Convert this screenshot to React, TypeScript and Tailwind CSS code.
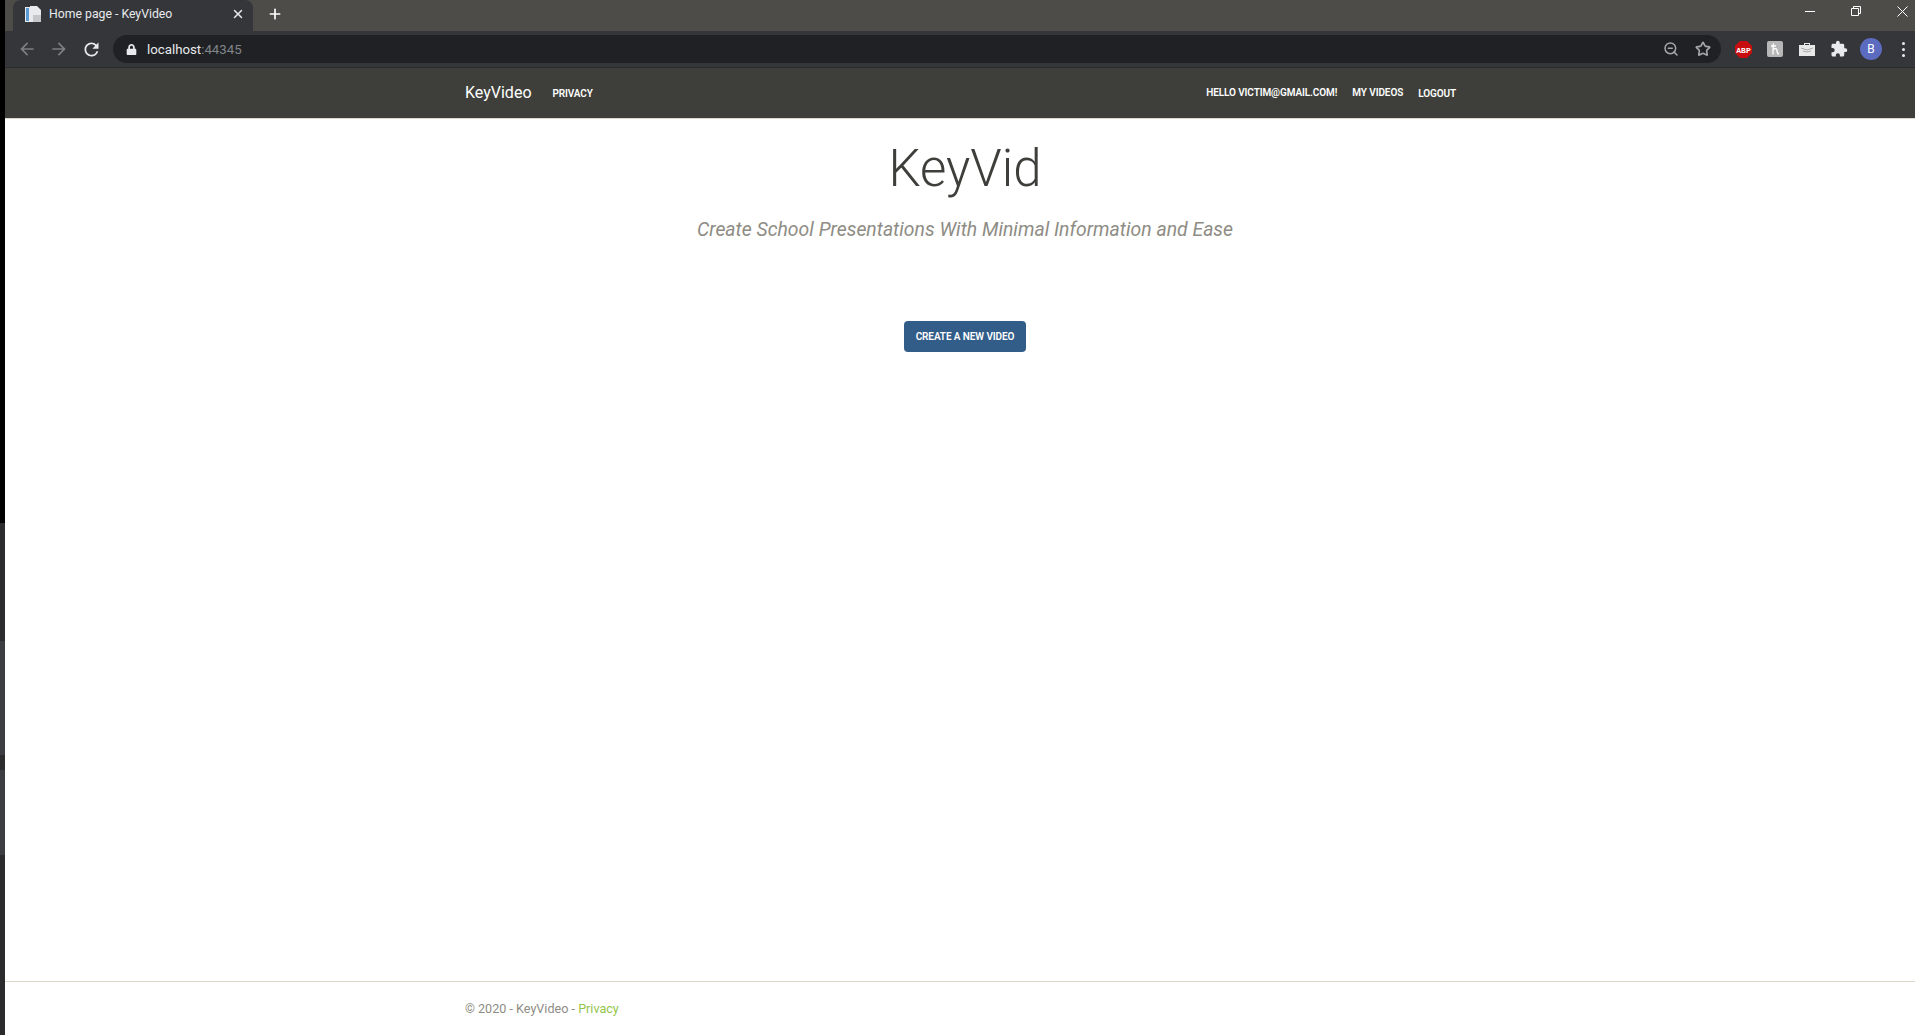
import { Plus, Star, X, ZoomOut } from 'lucide-react';
import { FaLock } from 'react-icons/fa';
import { MdArrowBack, MdArrowForward, MdExtension, MdRefresh } from 'react-icons/md';

function Favicon() {
    return (
        <svg width="16" height="16" viewBox="0 0 16 16" className="shrink-0">
            <path d="M0 1h5v15H0z" fill="#e8eaed" />
            <path d="M1 2h3v13H1z" fill="#5b9bd5" />
            <path d="M5 0h7l4 4v12H5z" fill="#e8eaed" />
            <path d="M8 9h8v7H8z" fill="#c4c7ca" />
        </svg>
    );
}

function AbpIcon() {
    return (
        <svg width="17" height="17" viewBox="0 0 17 17">
            <path d="M5 0h7l5 5v7l-5 5H5l-5-5V5z" fill="#c70d0d" />
            <text x="8.5" y="11.5" textAnchor="middle" fontSize="8" fontWeight="700" fontFamily="Liberation Mono, monospace" fill="#fff">ABP</text>
        </svg>
    );
}

function KeyIcon() {
    return (
        <svg width="16" height="16" viewBox="0 0 16 16">
            <rect width="16" height="16" rx="2" fill="#b7b7b7" />
            <path d="M4 5h5M6.5 2.5c-.5 3-.5 7-.5 11M6 9c2-2 4-1.500 4 .5 0 1.500 0 3 2 3.500" fill="none" stroke="#fff" strokeWidth="1.300" />
        </svg>
    );
}

function FolderIcon() {
    return (
        <svg width="16" height="14" viewBox="0 0 16 14">
            <path d="M5 3V1h6v2h-1V2H6v1z" fill="#e8e8e8" />
            <path d="M0 3h16v11H0z" fill="#e8e8e8" />
            <path d="M2 6l6 2 6-2M4 9l4 1 4-1" stroke="#a9a9a9" fill="none" />
        </svg>
    );
}

function Tabs() {
    return (
        <div className="flex h-[31px] overflow-hidden bg-[#4d4c48] text-white">
            <div className="ml-2 flex h-[31px] w-[240px] items-center rounded-t-lg bg-[#35363a] pb-[3px] pl-3 pr-2">
                <Favicon />
                <span className="ml-2 flex-1 text-[12.25px] text-[#e8eaed]">Home page - KeyVideo</span>
                <X size={14} strokeWidth={2.5} className="text-[#e8eaed]" />
            </div>
            <div className="ml-[14px] flex h-[28px] items-center">
                <Plus size={16} strokeWidth={2.5} />
            </div>
            <div className="-mr-[10px] ml-auto flex h-[22px] items-center">
                <div className="flex w-[46px] justify-center">
                    <div className="h-px w-[10px] bg-white" />
                </div>
                <div className="flex w-[46px] justify-center">
                    <svg width="10" height="10" viewBox="0 0 10 10" fill="none" stroke="white">
                        <path d="M0.500 2.500h7v7h-7z" />
                        <path d="M2.500 2.500v-2h7v7h-2" />
                    </svg>
                </div>
                <div className="flex w-[46px] justify-center">
                    <svg width="11" height="11" viewBox="0 0 11 11" stroke="white">
                        <path d="M0.500 0.500l10 10M10.500 0.500l-10 10" />
                    </svg>
                </div>
            </div>
        </div>
    );
}

function Toolbar() {
    return (
        <div className="flex h-[37px] items-center overflow-hidden border-b border-[#2a2b2e] bg-[#35363a] pl-[6px]">
            <div className="flex w-8 justify-center"><MdArrowBack size={20} className="text-[#7d7e81]" /></div>
            <div className="flex w-8 justify-center"><MdArrowForward size={20} className="text-[#7d7e81]" /></div>
            <div className="flex w-8 justify-center"><MdRefresh size={21} className="text-[#e8eaed]" /></div>
            <div className="ml-[6px] flex h-7 flex-1 items-center rounded-full bg-[#202124] pl-[13px] pr-[10px]">
                <FaLock size={11} className="text-[#e8eaed]" />
                <span className="ml-[10px] pt-px text-[13.25px] text-[#e8eaed]">localhost<span className="text-[#80868b]">:44345</span></span>
                <ZoomOut size={16} strokeWidth={2.25} className="ml-auto text-[#a5a6a8]" />
                <Star size={16} strokeWidth={2.5} className="ml-[16px] text-[#a5a6a8]" />
            </div>
            <div className="ml-[6px] flex w-8 justify-center"><AbpIcon /></div>
            <div className="flex w-8 justify-center"><KeyIcon /></div>
            <div className="flex w-8 justify-center"><FolderIcon /></div>
            <div className="flex w-8 justify-center"><MdExtension size={18} className="text-[#e8eaed]" /></div>
            <div className="flex w-8 justify-center">
                <div className="flex h-[22px] w-[22px] items-center justify-center rounded-full bg-[#5b6bc0] text-xs text-white">B</div>
            </div>
            <div className="-mr-1 flex w-8 flex-col items-center gap-[3px]">
                <div className="h-[3px] w-[3px] rounded-full bg-[#e8eaed]" />
                <div className="h-[3px] w-[3px] rounded-full bg-[#e8eaed]" />
                <div className="h-[3px] w-[3px] rounded-full bg-[#e8eaed]" />
            </div>
        </div>
    );
}

function Navbar() {
    return (
        <nav className="h-[51px] border-b border-[#dfd7ca] bg-[#3e3f3a] text-[10px] font-semibold uppercase tracking-[-0.1px] text-white">
            <div className="mx-auto flex h-full w-[1030px] items-center px-[15px]">
                <a className="text-[16px] normal-case font-normal tracking-normal">KeyVideo</a>
                <a className="ml-[21px]">Privacy</a>
                <div className="ml-auto flex items-center gap-[15px] pr-[9px]">
                    <a className="-translate-y-px">Hello victim@gmail.com!</a>
                    <a className="-translate-y-px">My Videos</a>
                    <a>Logout</a>
                </div>
            </div>
        </nav>
    );
}

function SideStrip() {
    return (
        <div className="flex w-[5px] shrink-0 flex-col">
            <div className="h-[523px] bg-black" />
            <div className="h-[118px] bg-[#2c2c2e]" />
            <div className="h-[114px] bg-[#3c3d42]" />
            <div className="h-[15px] bg-[#2c2c2e]" />
            <div className="h-[85px] bg-[#3c3d42]" />
            <div className="flex-1 bg-[#2b2b2d]" />
        </div>
    );
}

export default function App() {
    return (
        <div className="flex h-[1035px] overflow-hidden bg-white font-['Roboto',sans-serif]">
            <SideStrip />
            <div className="flex min-w-0 flex-1 flex-col">
                <Tabs />
                <Toolbar />
                <div className="flex-1 overflow-hidden">
                    <div className="flex h-full w-[1920px] flex-col">
                        <Navbar />
                        <main className="flex flex-1 flex-col items-center pt-[19px]">
                            <h1 className="text-[51px] font-light leading-[61px] text-[#3e3f3a]">KeyVid</h1>
                            <p className="mt-[16px] text-[19.4px] italic text-[#8e8c84]">Create School Presentations With Minimal Information and Ease</p>
                            <button className="mt-[77px] h-[31px] w-[122px] rounded bg-[#325d88] text-[10px] font-semibold uppercase tracking-[-0.1px] text-white">Create a new video</button>
                        </main>
                        <footer className="h-[54px] border-t border-[#dfd7ca] text-[12.6px] leading-[53px] text-[#8e8c84]">
                            <div className="mx-auto w-[1030px] px-[15px]">
                                © 2020 - KeyVideo - <a className="text-[#93c54b]">Privacy</a>
                            </div>
                        </footer>
                    </div>
                </div>
            </div>
        </div>
    );
}
